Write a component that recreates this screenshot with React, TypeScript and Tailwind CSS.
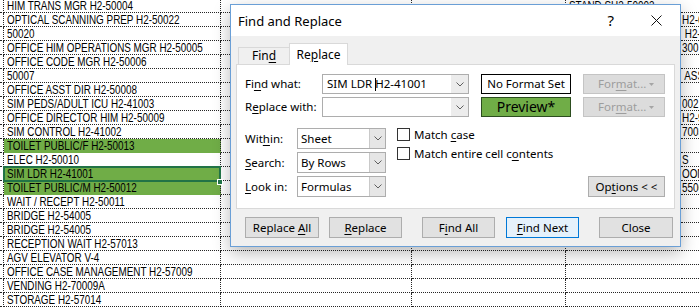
import React from 'react'

const sheetRows = [
  'HIM TRANS MGR H2-50004',
  'OPTICAL SCANNING PREP H2-50022',
  '50020',
  'OFFICE HIM OPERATIONS MGR H2-50005',
  'OFFICE CODE MGR H2-50006',
  '50007',
  'OFFICE ASST DIR H2-50008',
  'SIM PEDS/ADULT ICU H2-41003',
  'OFFICE DIRECTOR HIM H2-50009',
  'SIM CONTROL H2-41002',
  'TOILET PUBLIC/F H2-50013',
  'ELEC H2-50010',
  'SIM LDR H2-41001',
  'TOILET PUBLIC/M H2-50012',
  'WAIT / RECEPT H2-50011',
  'BRIDGE H2-54005',
  'BRIDGE H2-54005',
  'RECEPTION WAIT H2-57013',
  'AGV ELEVATOR V-4',
  'OFFICE CASE MANAGEMENT H2-57009',
  'VENDING H2-70009A',
  'STORAGE H2-57014',
]

// text peeking out on the right of the dialog
const rightText: Record<number, string> = {
  1: 'H2-6',
  2: ' H2-',
  3: '300',
  5: ' ASS',
  7: '002',
  8: 'H2-9',
  9: '7003',
  11: 'S',
  12: 'OON',
  13: '5500',
}

const greenRows = new Set([10, 12, 13])
const line = 'border-dotted border-[#262626]'

const CellText = ({ children }: { children: React.ReactNode }) => (
  <span className="inline-block origin-left scale-x-[0.76] whitespace-pre">{children}</span>
)

const U = ({ children }: { children: React.ReactNode }) => (
  <span className="underline underline-offset-[2px]">{children}</span>
)

const Chevron = () => (
  <svg width="8" height="5" viewBox="0 0 8 5">
    <path d="M0.5 0.5L4 4L7.5 0.5" fill="none" stroke="#5f5f5f" strokeWidth="1" />
  </svg>
)

function SheetRow({ i, text }: { i: number; text: string }) {
  const green = greenRows.has(i)
  return (
    <div className="flex h-[14px]">
      <div className={`w-[4px] border-r border-b ${line}`} />
      <div
        className={`relative w-[217px] pl-[3px] border-r border-b ${line} ${green ? 'bg-[#70ad47] border-b-[#70ad47]' : ''}`}
      >
        <CellText>{text}</CellText>
        {i === 12 && (
          <>
            <div className="absolute -left-[1px] -top-[1px] -right-[1px] -bottom-[2px] z-10 border-2 border-[#217346]" />
            <div className="absolute -right-[3px] -bottom-[5px] z-10 h-[6px] w-[6px] border border-white bg-[#217346]" />
          </>
        )}
      </div>
      <div className={`w-[191px] border-r border-b ${line}`} />
      <div className={`w-[154px] border-r border-b ${line}`} />
      <div className={`w-[116px] overflow-hidden pl-[3px] border-b ${line}`}>
        {i === 0 && <CellText>STAND SH2-50003</CellText>}
      </div>
      <div className={`flex-1 overflow-hidden border-b ${line}`}>
        {rightText[i] && <CellText>{rightText[i]}</CellText>}
      </div>
    </div>
  )
}

function Combo({ children }: { children?: React.ReactNode }) {
  return (
    <div className="flex h-full w-[147px] border border-[#adadad] bg-white">
      <div className="flex flex-1 items-center pl-[4px]">
        <span className="whitespace-pre">{children}</span>
      </div>
      <div className="flex w-[17px] items-center justify-center bg-[#ececec]">
        <Chevron />
      </div>
    </div>
  )
}

function FormatBtn() {
  return (
    <div className="ml-[12px] flex h-full w-[82px] items-center border border-[#c4c4c4] bg-[#dcdcdc] pl-[14px] pr-[10px] text-[#9d9d9d]">
      <span>
        For<U>m</U>at...
      </span>
      <svg className="ml-auto" width="5" height="3" viewBox="0 0 5 3">
        <path d="M0 0H5L2.5 3Z" fill="#a5a5a5" />
      </svg>
    </div>
  )
}

function SelectRow({ label, value }: { label: React.ReactNode; value: string }) {
  return (
    <div className="flex h-[21px] items-center">
      <span className="w-[52px]">{label}</span>
      <div className="flex h-full w-[89px] border border-[#adadad] bg-white">
        <div className="flex flex-1 items-center pl-[3px]">
          <span>{value}</span>
        </div>
        <div className="flex w-[16px] items-center justify-center border-l border-[#c9c9c9] bg-[#e6e6e6]">
          <Chevron />
        </div>
      </div>
    </div>
  )
}

function Check({ children }: { children: React.ReactNode }) {
  return (
    <div className="flex h-[13px] items-center">
      <div className="h-[13px] w-[13px] border border-[#333] bg-white" />
      <span className="ml-[4px]">{children}</span>
    </div>
  )
}

function Btn({ className, children }: { className: string; children: React.ReactNode }) {
  return (
    <div className={`flex h-[21px] items-center justify-center border ${className}`}>
      <span>{children}</span>
    </div>
  )
}

function Dialog() {
  return (
    <div className="absolute left-[230px] top-[4px] flex h-[243px] w-[451px] flex-col border border-[#6a9fd6] bg-[#f0f0f0] font-['Noto_Sans',sans-serif] text-[11.5px] leading-[16px] text-black shadow-[0_6px_16px_rgba(0,0,0,0.28)]">
      <div className="flex h-[31px] shrink-0 items-center bg-white pl-[7px]">
        <span className="text-[13px]">Find and Replace</span>
        <span className="ml-auto text-[15px] leading-none">?</span>
        <svg className="ml-[37px] mr-[18px]" width="11" height="11" viewBox="0 0 11 11">
          <path d="M0.5 0.5L10.5 10.5M10.5 0.5L0.5 10.5" stroke="#111" strokeWidth="1" />
        </svg>
      </div>

      <div className="mt-[7px] flex h-[21px] items-end pl-[7px] text-[12px]">
        <div className="flex h-[17px] w-[51px] items-center justify-center border-l border-t border-[#d9d9d9]">
          <span>
            Fin<U>d</U>
          </span>
        </div>
        <div className="relative z-10 -mb-[1px] flex h-[22px] w-[59px] items-center justify-center border-x border-t border-[#d9d9d9] bg-white">
          <span>
            Re<U>p</U>lace
          </span>
        </div>
      </div>

      <div className="mx-[5px] h-[145px] border border-[#d9d9d9] bg-white pl-[8px] pr-[9px] pt-[9px]">
        <div className="flex h-[20px] items-center">
          <span className="w-[77px]">
            Fi<U>n</U>d what:
          </span>
          <Combo>
            SIM LDR <span className="-mr-px inline-block h-[13px] w-px bg-black align-middle" />H2-41001
          </Combo>
          <div className="ml-[12px] flex h-full w-[90px] items-center justify-center border border-black bg-white">
            <span>No Format Set</span>
          </div>
          <FormatBtn />
        </div>

        <div className="mt-[3px] flex h-[20px] items-center">
          <span className="w-[77px]">
            R<U>e</U>place with:
          </span>
          <Combo />
          <div className="ml-[12px] flex h-full w-[90px] items-center justify-center border border-[#2c4d1f] bg-[#70ad47] text-[14px]">
            <span>Preview*</span>
          </div>
          <FormatBtn />
        </div>

        <div className="mt-[11px] flex">
          <div className="flex flex-col gap-[3px]">
            <SelectRow label={<>Wit<U>h</U>in:</>} value="Sheet" />
            <SelectRow label={<><U>S</U>earch:</>} value="By Rows" />
            <SelectRow label={<><U>L</U>ook in:</>} value="Formulas" />
          </div>
          <div className="ml-[11px] flex flex-col gap-[6px]">
            <Check>
              Match <U>c</U>ase
            </Check>
            <Check>
              Match entire cell c<U>o</U>ntents
            </Check>
          </div>
          <div className="ml-auto flex h-[21px] w-[77px] items-center justify-center self-end border border-[#adadad] bg-[#e1e1e1]">
            <span>
              Op<U>t</U>ions &lt; &lt;
            </span>
          </div>
        </div>
      </div>

      <div className="mt-[8px] flex pl-[14px]">
        <Btn className="w-[74px] border-[#adadad] bg-[#e1e1e1]">
          Replace <U>A</U>ll
        </Btn>
        <Btn className="ml-[10px] w-[73px] border-[#adadad] bg-[#e1e1e1]">
          <U>R</U>eplace
        </Btn>
        <Btn className="ml-[20px] w-[73px] border-[#adadad] bg-[#e1e1e1]">
          F<U>i</U>nd All
        </Btn>
        <Btn className="ml-[11px] w-[73px] border-[#0078d7] bg-[#e5f1fb]">
          <U>F</U>ind Next
        </Btn>
        <Btn className="ml-[20px] w-[74px] border-[#adadad] bg-[#e1e1e1]">Close</Btn>
      </div>
    </div>
  )
}

export default function App() {
  return (
    <div className="relative h-[307px] w-[699px] overflow-hidden bg-white">
      <div className="-mt-[1px] font-['Liberation_Sans',Arial,sans-serif] text-[13px] leading-[13px] text-black">
        {sheetRows.map((t, i) => (
          <SheetRow key={i} i={i} text={t} />
        ))}
      </div>
      <Dialog />
    </div>
  )
}
